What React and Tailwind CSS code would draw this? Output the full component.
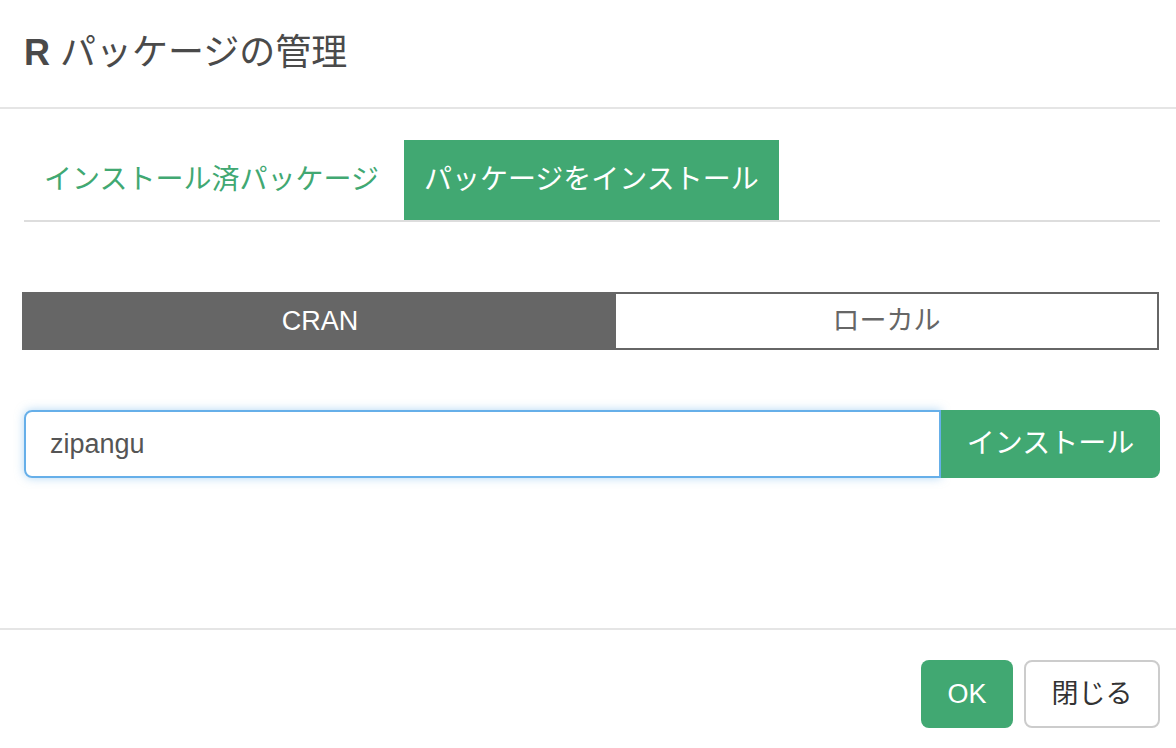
export default function App() {
  const font = { fontFamily: '"Liberation Sans", "Noto Sans CJK JP", sans-serif' };
  return (
    <div style={font} className="w-[1176px] h-[748px] bg-white text-[#333] overflow-hidden flex flex-col">
      {/* Header */}
      <div className="h-[109px] border-b-2 border-[#e5e5e5] flex items-center px-6">
        <h1 className="text-[36px] text-[#4a4a4a] leading-none pb-[2px]">
          <span className="font-bold">R</span> パッケージの管理
        </h1>
      </div>

      {/* Body */}
      <div className="flex-1 pl-6 pr-4 pt-[31px]">
        {/* Tabs */}
        <div className="flex border-b-2 border-[#ddd] h-[82px]">
          <button className="px-5 h-[80px] text-[28px] text-[#41a872] leading-none">
            インストール済パッケージ
          </button>
          <button className="ml-[5px] px-5 h-[80px] text-[28px] text-white bg-[#41a872] leading-none">
            パッケージをインストール
          </button>
        </div>

        {/* CRAN / Local toggle */}
        <div className="mt-[70px] -ml-[2px] mr-[1px] flex h-[58px] border-2 border-[#666]">
          <div className="w-[592px] bg-[#666] text-white text-[27px] flex items-center justify-center">
            CRAN
          </div>
          <div className="flex-1 bg-white text-[#666] text-[27px] flex items-center justify-center">
            ローカル
          </div>
        </div>

        {/* Input group */}
        <div className="mt-[60px] flex h-[68px]">
          <div className="flex-1 border-2 border-[#66afe9] rounded-l-[8px] shadow-[0_0_10px_rgba(102,175,233,0.5)] flex items-center px-6 text-[27px] text-[#555]">
            zipangu
          </div>
          <button className="w-[219px] bg-[#41a872] text-white text-[28px] rounded-r-[8px]">
            インストール
          </button>
        </div>
      </div>

      {/* Footer */}
      <div className="h-[120px] border-t-2 border-[#e5e5e5] flex items-start justify-end gap-[11px] pr-4 pt-[30px]">
        <button className="w-[92px] h-[68px] bg-[#41a872] text-white text-[27px] rounded-[8px]">
          OK
        </button>
        <button className="w-[136px] h-[68px] border-2 border-[#ccc] bg-white text-[#333] text-[27px] rounded-[8px]">
          閉じる
        </button>
      </div>
    </div>
  );
}
